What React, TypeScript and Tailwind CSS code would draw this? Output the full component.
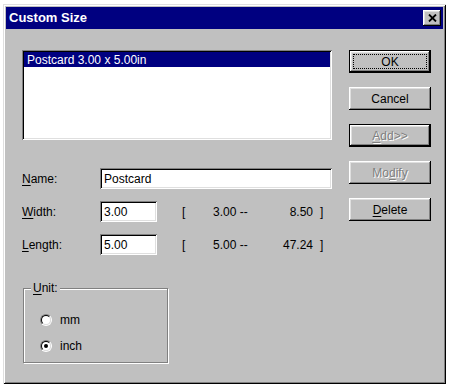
import React from "react";

const raised =
  "shadow-[inset_-1px_-1px_0_#000,inset_1px_1px_0_#fff,inset_-2px_-2px_0_#808080,inset_2px_2px_0_#dfdfdf]";
const sunken =
  "shadow-[inset_1px_1px_0_#808080,inset_-1px_-1px_0_#fff,inset_2px_2px_0_#000,inset_-2px_-2px_0_#dfdfdf]";

function Btn({
  children,
  def,
  focus,
  disabled,
}: {
  children: React.ReactNode;
  def?: boolean;
  focus?: boolean;
  disabled?: boolean;
}) {
  const inner = (
    <div
      className={`relative flex h-full w-full items-center justify-center bg-[#c0c0c0] ${raised} ${
        disabled ? "text-[#808080] [text-shadow:1px_1px_0_#fff]" : "text-black"
      }`}
    >
      {children}
      {focus && <span className="absolute inset-[3px] border border-dotted border-black" />}
    </div>
  );
  return def ? (
    <div className="h-[23px] w-[82px] border border-black">{inner}</div>
  ) : (
    <div className="h-[23px] w-[82px]">{inner}</div>
  );
}

function Radio({ checked, label }: { checked?: boolean; label: string }) {
  return (
    <div className="flex h-[16px] items-center">
      <div className="h-[12px] w-[12px] rounded-full border border-b-white border-l-[#808080] border-r-white border-t-[#808080]">
        <div className="flex h-full w-full items-center justify-center rounded-full border border-b-[#dfdfdf] border-l-black border-r-[#dfdfdf] border-t-black bg-white">
          {checked && <div className="h-[4px] w-[4px] rounded-full bg-black" />}
        </div>
      </div>
      <span className="ml-[8px]">{label}</span>
    </div>
  );
}

function Row({
  label,
  u,
  rest,
  value,
  inputW,
  range,
}: {
  label: string;
  u: string;
  rest: string;
  value: string;
  inputW: string;
  range?: [string, string];
}) {
  return (
    <div className="flex h-[21px] items-center">
      <div className="w-[78px]">
        <span className="underline underline-offset-[2px]">{u}</span>
        {rest}
        {label}
      </div>
      <div className={`flex h-full items-center bg-white pl-[4px] ${sunken} ${inputW}`}>{value}</div>
      {range && (
        <div className="flex items-center">
          <span className="ml-[25px] w-[31px]">[</span>
          <span className="w-[60px]">{range[0]} --</span>
          <span className="w-[40px] text-right">{range[1]}</span>
          <span className="ml-[7px]">]</span>
        </div>
      )}
    </div>
  );
}

export default function App() {
  return (
    <div className="h-[387px] w-[451px] bg-white pl-[3px] pt-[4px] font-['Liberation_Sans',Arial,sans-serif] text-[12px] text-black">
      <div
        className={`flex h-[380px] w-[443px] flex-col bg-[#c0c0c0] p-[3px] shadow-[inset_1px_1px_0_#dfdfdf,inset_-1px_-1px_0_#000,inset_2px_2px_0_#fff,inset_-2px_-2px_0_#808080]`}
      >
        <div className="flex h-[22px] items-center justify-between bg-[#000080] pl-[3px] pr-[2px]">
          <span className="text-[13px] font-bold text-white">Custom Size</span>
          <div className={`flex h-[16px] w-[18px] items-center justify-center bg-[#c0c0c0] ${raised}`}>
            <svg width="9" height="8" viewBox="0 0 9 8" className="mb-[1px]">
              <path d="M1 0.5 L8 7.5 M8 0.5 L1 7.5" stroke="#000" strokeWidth="1.8" />
            </svg>
          </div>
        </div>

        <div className="flex gap-[17px] pl-[16px] pt-[21px]">
          <div className="flex w-[310px] flex-col">
            <div className={`h-[90px] bg-white p-[2px] ${sunken}`}>
              <div className="flex h-[15px] items-center bg-[#000080] pl-[3px] text-white">
                Postcard 3.00 x 5.00in
              </div>
            </div>

            <div className="mt-[28px] flex flex-col gap-[12px]">
              <Row label="" u="N" rest="ame:" value="Postcard" inputW="w-[232px]" />
              <Row label="" u="W" rest="idth:" value="3.00" inputW="w-[57px]" range={["3.00", "8.50"]} />
              <Row label="" u="L" rest="ength:" value="5.00" inputW="w-[57px]" range={["5.00", "47.24"]} />
            </div>

            <div className="relative ml-[1px] mt-[33px] h-[75px] w-[145px] border border-[#808080] pl-[16px] pt-[23px] shadow-[inset_1px_1px_0_#fff,1px_1px_0_#fff]">
              <span className="absolute left-[7px] top-[-8px] bg-[#c0c0c0] px-[2px] leading-[14px]">
                <span className="underline underline-offset-[2px]">U</span>nit:
              </span>
              <div className="flex flex-col gap-[10px]">
                <Radio label="mm" />
                <Radio label="inch" checked />
              </div>
            </div>
          </div>

          <div className="flex flex-col gap-[14px]">
            <Btn def focus>
              OK
            </Btn>
            <Btn>Cancel</Btn>
            <Btn def disabled>
              <span>
                <span className="underline underline-offset-[2px]">A</span>dd&gt;&gt;
              </span>
            </Btn>
            <Btn disabled>
              <span>
                Mo<span className="underline underline-offset-[2px]">d</span>ify
              </span>
            </Btn>
            <Btn>
              <span>
                <span className="underline underline-offset-[2px]">D</span>elete
              </span>
            </Btn>
          </div>
        </div>
      </div>
    </div>
  );
}
